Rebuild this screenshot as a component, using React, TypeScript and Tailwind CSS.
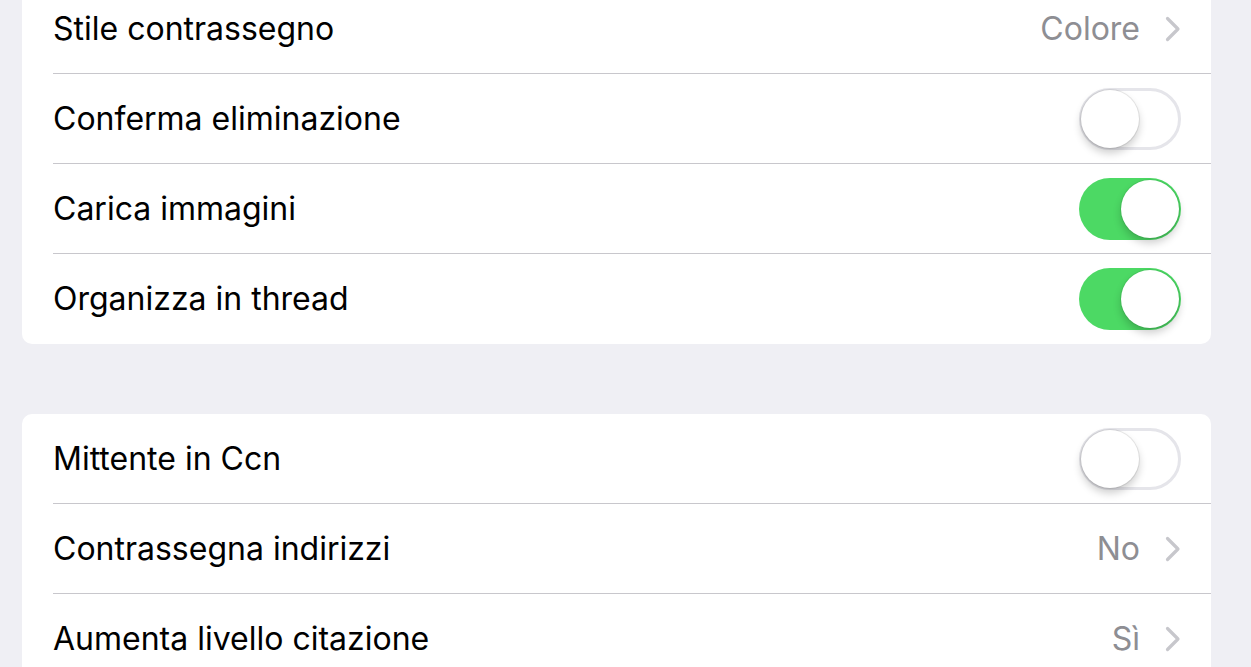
import React, { useState } from 'react';

type Row =
  | { kind: 'link'; label: string; value: string }
  | { kind: 'toggle'; label: string; on: boolean };

const groups: Row[][] = [
  [
    { kind: 'link', label: 'Stile contrassegno', value: 'Colore' },
    { kind: 'toggle', label: 'Conferma eliminazione', on: false },
    { kind: 'toggle', label: 'Carica immagini', on: true },
    { kind: 'toggle', label: 'Organizza in thread', on: true },
  ],
  [
    { kind: 'toggle', label: 'Mittente in Ccn', on: false },
    { kind: 'link', label: 'Contrassegna indirizzi', value: 'No' },
    { kind: 'link', label: 'Aumenta livello citazione', value: 'Sì' },
  ],
];

function Chevron() {
  return (
    <svg width="16" height="26" viewBox="0 0 16 26" fill="none" className="shrink-0">
      <path d="M2.5 2.5 L13 13 L2.5 23.5" stroke="#c7c7cc" strokeWidth="3.2" strokeLinecap="round" strokeLinejoin="round" />
    </svg>
  );
}

function Toggle({ initial }: { initial: boolean }) {
  const [on, setOn] = useState(initial);
  return (
    <button
      onClick={() => setOn(!on)}
      className={
        on
          ? 'relative w-[102px] h-[62px] rounded-full bg-[#4cd964] shrink-0 cursor-pointer'
          : 'relative w-[102px] h-[62px] rounded-full bg-white border-[3px] border-[#e5e5ea] shrink-0 cursor-pointer'
      }
    >
      <span
        className={
          on
            ? 'absolute top-[2px] right-[2px] w-[58px] h-[58px] rounded-full bg-white shadow-[0_5px_8px_rgba(0,0,0,0.2),0_0_0_1px_rgba(0,0,0,0.06)]'
            : 'absolute top-[-1px] left-[-1px] w-[58px] h-[58px] rounded-full bg-white shadow-[0_5px_8px_rgba(0,0,0,0.2),0_0_0_1px_rgba(0,0,0,0.08)]'
        }
      />
    </button>
  );
}

export default function App() {
  return (
    <div className="w-[1251px] h-[667px] overflow-hidden bg-[#efeff4] font-['Inter','Liberation_Sans',sans-serif] text-black">
      <div className="flex flex-col gap-[70px] px-[22px] pr-[40px] mt-[-16px]">
        {groups.map((rows, gi) => (
          <div key={gi} className={gi === 0 ? 'bg-white rounded-b-[10px]' : 'bg-white rounded-t-[10px]'}>
            {rows.map((row, i) => (
              <div key={i} className="pl-[31px]">
                <div
                  className={
                    i < rows.length - 1
                      ? 'h-[90px] flex items-center pr-[30px] border-b border-[#c8c7cc]'
                      : 'h-[90px] flex items-center pr-[30px]'
                  }
                >
                  <span className="flex-1 text-[32px]">{row.label}</span>
                  {row.kind === 'link' ? (
                    <div className="flex items-center gap-[25px]">
                      <span className="text-[32px] text-[#8e8e93]">{row.value}</span>
                      <Chevron />
                    </div>
                  ) : (
                    <Toggle initial={row.on} />
                  )}
                </div>
              </div>
            ))}
          </div>
        ))}
      </div>
    </div>
  );
}
